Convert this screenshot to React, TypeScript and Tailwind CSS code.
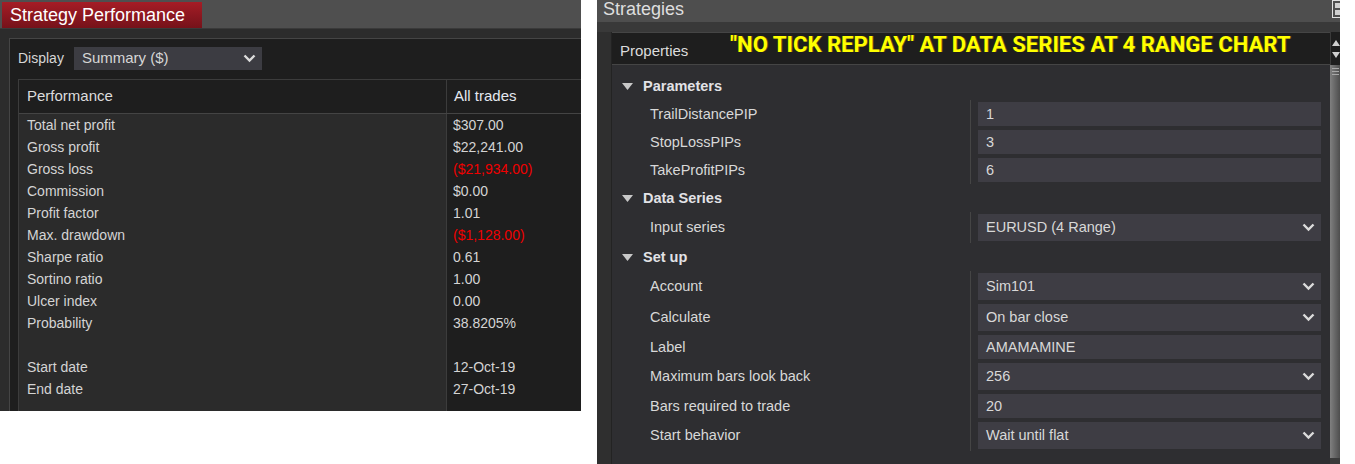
import React from 'react';

type PerfRow = { label: string; value: string; negative?: boolean };

const perfRows: PerfRow[] = [
  { label: 'Total net profit', value: '$307.00' },
  { label: 'Gross profit', value: '$22,241.00' },
  { label: 'Gross loss', value: '($21,934.00)', negative: true },
  { label: 'Commission', value: '$0.00' },
  { label: 'Profit factor', value: '1.01' },
  { label: 'Max. drawdown', value: '($1,128.00)', negative: true },
  { label: 'Sharpe ratio', value: '0.61' },
  { label: 'Sortino ratio', value: '1.00' },
  { label: 'Ulcer index', value: '0.00' },
  { label: 'Probability', value: '38.8205%' },
  { label: '', value: '' },
  { label: 'Start date', value: '12-Oct-19' },
  { label: 'End date', value: '27-Oct-19' },
];

type Prop = { name: string; value: string; select?: boolean };
type Section = { title: string; props: Prop[] };

const sections: Section[] = [
  {
    title: 'Parameters',
    props: [
      { name: 'TrailDistancePIP', value: '1' },
      { name: 'StopLossPIPs', value: '3' },
      { name: 'TakeProfitPIPs', value: '6' },
    ],
  },
  {
    title: 'Data Series',
    props: [{ name: 'Input series', value: 'EURUSD (4 Range)', select: true }],
  },
  {
    title: 'Set up',
    props: [
      { name: 'Account', value: 'Sim101', select: true },
      { name: 'Calculate', value: 'On bar close', select: true },
      { name: 'Label', value: 'AMAMAMINE' },
      { name: 'Maximum bars look back', value: '256', select: true },
      { name: 'Bars required to trade', value: '20' },
      { name: 'Start behavior', value: 'Wait until flat', select: true },
    ],
  },
];

const Chevron: React.FC = () => (
  <svg width="13" height="9" viewBox="0 0 13 9" className="shrink-0">
    <polyline points="1.5,1.5 6.5,6.5 11.5,1.5" fill="none" stroke="#dcdcdc" strokeWidth={2.4} />
  </svg>
);

const Triangle: React.FC = () => (
  <svg width="11" height="7" viewBox="0 0 11 7" className="shrink-0">
    <polygon points="0,0 11,0 5.5,7" fill="#c8c8c8" />
  </svg>
);

const StrategyPerformance: React.FC = () => (
  <div className="w-[581px] h-[411px] flex flex-col bg-[#2c2c2c] overflow-hidden">
    {/* title bar */}
    <div className="h-[29px] shrink-0 bg-[#4f4f4f] pl-[2px] pt-[2px] border-b border-[#3a3a3a]">
      <div className="w-[200px] h-[26px] bg-gradient-to-b from-[#a51d26] to-[#76121a] flex items-center pl-[8px] text-[18px] text-white leading-none">
        Strategy Performance
      </div>
    </div>

    <div className="flex-1 pl-[9px] pt-[9px] flex flex-col min-h-0">
      <div className="flex-1 bg-[#1e1e1e] border-t border-l border-[#454545] pl-[8px] pt-[8px] flex flex-col min-h-0">
        {/* display selector */}
        <div className="flex items-center h-[23px] text-[14px] text-[#d6d6d6]">
          <span>Display</span>
          <div className="ml-[10px] w-[188px] h-[23px] bg-[#3c3c42] flex items-center justify-between pl-[8px] pr-[6px] text-[15px]">
            <span>Summary ($)</span>
            <Chevron />
          </div>
        </div>

        {/* table */}
        <div className="mt-[9px] flex-1 flex flex-col border-l border-t border-[#3c3c3c] min-h-0">
          <div className="h-[34px] shrink-0 flex border-b border-[#444] text-[15px] text-[#dcdcdc]">
            <div className="w-[427px] pl-[8px] flex items-center">Performance</div>
            <div className="flex-1 pl-[7px] flex items-center border-l border-[#3c3c3c] text-[#e4e8f0]">All trades</div>
          </div>
          <div className="flex-1 flex text-[14px] text-[#d4d4d4]">
            <div className="w-[427px] bg-[#2b2b2b] flex flex-col">
              {perfRows.map((r, i) => (
                <div key={i} className="h-[22px] pl-[8px] flex items-center">{r.label}</div>
              ))}
            </div>
            <div className="flex-1 flex flex-col border-l border-[#3c3c3c]">
              {perfRows.map((r, i) => (
                <div key={i} className={`h-[22px] pl-[6px] flex items-center ${r.negative ? 'text-[#f00000]' : ''}`}>
                  {r.value}
                </div>
              ))}
            </div>
          </div>
        </div>
      </div>
    </div>
  </div>
);

const Strategies: React.FC = () => (
  <div className="w-[743px] h-[464px] flex flex-col bg-[#3a3a3a] overflow-hidden">
    {/* title bar */}
    <div className="h-[22px] shrink-0 bg-[#4e4e4e] flex items-start justify-between">
      <span className="pl-[6px] text-[18px] leading-[19px] text-[#dedede]">Strategies</span>
      <div className="w-[8px] h-[18px] border border-r-0 border-[#e0e0e0] flex flex-col items-center justify-center gap-[2px] pl-[1px]">
        <div className="w-[5px] h-[5px] bg-[#cfcfcf]" />
        <div className="w-[5px] h-[5px] bg-[#cfcfcf]" />
      </div>
    </div>
    <div className="h-[10px] shrink-0 bg-[#393939]" />

    <div className="flex-1 flex min-h-0">
      <div className="w-[15px] shrink-0 bg-[#2f2f2f] border-r border-[#232323]" />

      <div className="flex-1 flex flex-col min-w-0">
        {/* header */}
        <div className="h-[33px] shrink-0 bg-[#1e1e1e] border-t border-b border-[#454545] flex items-start">
          <span className="pl-[8px] pt-[7px] text-[15px] text-[#dcdcdc] w-[118px]">Properties</span>
          <span className="mt-[1px] font-['Roboto',sans-serif] font-bold text-[22px] leading-[22px] tracking-[0.05px] text-[#ffff00] [text-shadow:1px_0_0_#6b5a00]">
            "NO TICK REPLAY" AT DATA SERIES AT 4 RANGE CHART
          </span>
        </div>

        {/* property grid */}
        <div className="flex-1 bg-[#2e2e31] pt-[7px] text-[14.5px] text-[#d8d8d8] pr-[9px]">
          {sections.map(s => (
            <div key={s.title}>
              <div className="h-[28px] flex items-center pl-[10px] gap-[10px] pt-[1px]">
                <Triangle />
                <span className="font-bold text-[#e2e2e6]">{s.title}</span>
              </div>
              {s.props.map(p => (
                <div key={p.name} className={`flex ${p.select ? 'h-[31px]' : 'h-[28px]'}`}>
                  <div className="w-[358px] pl-[38px] pt-[1px] flex items-center">{p.name}</div>
                  <div className="flex-1 border-l border-[#454545] pl-[7px] py-[2px]">
                    <div className="h-full bg-[#3e3d44] flex items-center justify-between pl-[8px] pr-[6px]">
                      <span className="pt-[1px]">{p.value}</span>
                      {p.select && <Chevron />}
                    </div>
                  </div>
                </div>
              ))}
            </div>
          ))}
        </div>
      </div>

      {/* scrollbar */}
      <div className="w-[10px] shrink-0 flex flex-col">
        <div className="h-[33px] bg-[#1e1e1e] border-l border-[#3a3a3a] flex flex-col items-center justify-center gap-[6px]">
          <svg width="8" height="6" viewBox="0 0 8 6"><polygon points="4,0 8,6 0,6" fill="#d0d0d0" /></svg>
          <svg width="8" height="6" viewBox="0 0 8 6"><polygon points="0,0 8,0 4,6" fill="#d0d0d0" /></svg>
        </div>
        <div className="flex-1 bg-gradient-to-r from-[#808080] to-[#4e4e4e] pt-[3px] flex flex-col items-center gap-[2px] mb-[6px]">
          <div className="w-[7px] h-px bg-[#a8a8a8]" />
          <div className="w-[7px] h-px bg-[#a8a8a8]" />
          <div className="w-[7px] h-px bg-[#a8a8a8]" />
        </div>
      </div>
    </div>
  </div>
);

export default function App() {
  return (
    <div className="w-[1355px] h-[464px] bg-white flex font-['Liberation_Sans',Arial,sans-serif] overflow-hidden">
      <StrategyPerformance />
      <div className="w-[16px] shrink-0" />
      <Strategies />
    </div>
  );
}
